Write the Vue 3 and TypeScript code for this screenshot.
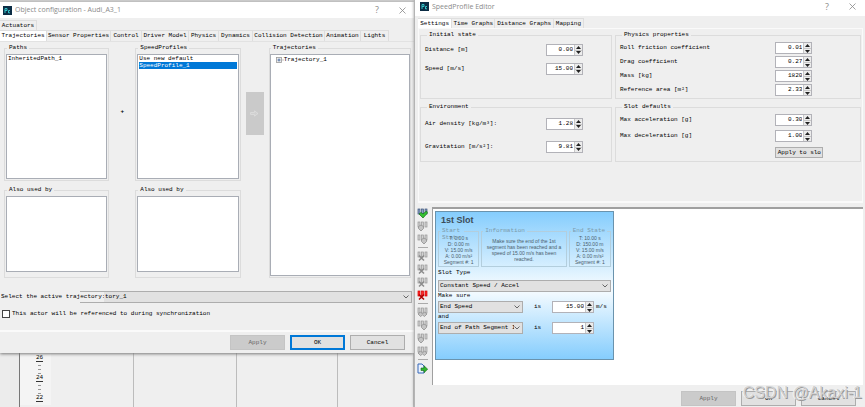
<script setup lang="ts">
import { ref } from 'vue'

interface Field {
  id: string
  label: string
  value: string
}

interface Tool {
  name: string
  kind: 'check' | 'arrow' | 'cross' | 'red' | 'plus' | 'export' | 'line'
  at?: number
}

const objectTabs = ['Trajectories', 'Sensor Properties', 'Control', 'Driver Model', 'Physics', 'Dynamics', 'Collision Detection', 'Animation', 'Lights']
const profileTabs = ['Settings', 'Time Graphs', 'Distance Graphs', 'Mapping']

const initial = ref<Field[]>([
  { id: 'distance', label: 'Distance [m]', value: '0.00' },
  { id: 'speed', label: 'Speed [m/s]', value: '15.00' },
])
const physics = ref<Field[]>([
  { id: 'roll', label: 'Roll friction coefficient', value: '0.01' },
  { id: 'drag', label: 'Drag coefficient', value: '0.27' },
  { id: 'mass', label: 'Mass [kg]', value: '1820' },
  { id: 'area', label: 'Reference area [m²]', value: '2.33' },
])
const environment = ref<Field[]>([
  { id: 'air', label: 'Air density [kg/m³]:', value: '1.28' },
  { id: 'gravity', label: 'Gravitation [m/s²]:', value: '9.81' },
])
const defaults = ref<Field[]>([
  { id: 'accel', label: 'Max acceleration [g]', value: '0.30' },
  { id: 'decel', label: 'Max deceleration [g]', value: '1.00' },
])
const endSpeed = ref('15.00')
const segment = ref('1')

const tools: Tool[] = [
  { name: 'Validate', kind: 'check' },
  { name: 'Insert before', kind: 'arrow', at: 4 },
  { name: 'Insert after', kind: 'arrow', at: 7 },
  { name: 's1', kind: 'line' },
  { name: 'Delete all', kind: 'cross', at: 4 },
  { name: 'Delete left', kind: 'cross', at: 4 },
  { name: 'Delete right', kind: 'cross', at: 4 },
  { name: 'Delete slot', kind: 'red', at: 4 },
  { name: 's2', kind: 'line' },
  { name: 'Copy', kind: 'plus', at: 5 },
  { name: 'Paste after', kind: 'arrow', at: 7 },
  { name: 'Paste before', kind: 'arrow', at: 4 },
  { name: 'Duplicate', kind: 'plus', at: 5 },
  { name: 's3', kind: 'line' },
  { name: 'Export', kind: 'export' },
]
</script>

<template>
  <div class="desktop">
    <div class="left">
      <section class="window">
        <header class="title">
          <svg class="logo" viewBox="0 0 9 9"><rect width="9" height="9" fill="#0b2c44" /><path d="M2 7V2.500H4V4.500H2M5.500 7V4.500H7M5.500 6.800H7" fill="none" stroke="#35c4c9" /></svg>
          <h1>Object configuration - Audi_A3_1</h1>
          <button class="sys" aria-label="Help">?</button>
          <button class="sys" aria-label="Close"><svg viewBox="0 0 7 7"><path d="M.5.5l6 6M6.500.5l-6 6" stroke="#888" stroke-width=".8" /></svg></button>
        </header>
        <div class="tabs first"><button class="tab">Actuators</button></div>
        <div class="tabs object">
          <button v-for="(t, i) in objectTabs" :key="t" class="tab" :class="{ active: i === 0 }">{{ t }}</button>
        </div>
        <div class="objpanel">
          <div class="lists">
            <div class="stack">
              <fieldset class="paths"><legend>Paths</legend><ul class="list"><li>InheritedPath_1</li></ul></fieldset>
              <fieldset class="used"><legend>Also used by</legend><ul class="list"></ul></fieldset>
            </div>
            <span class="plus">+</span>
            <div class="stack">
              <fieldset class="paths"><legend>SpeedProfiles</legend><ul class="list"><li>Use new default</li><li class="sel">SpeedProfile_1</li></ul></fieldset>
              <fieldset class="used"><legend>Also used by</legend><ul class="list"></ul></fieldset>
            </div>
            <button class="assign" aria-label="Assign"><svg viewBox="0 0 9 7"><path d="M.5 2.500h4V.8L8 3.500 4.500 6.200V4.500h-4z" fill="#d0d0d0" stroke="#e2e2e2" stroke-width=".6" /></svg></button>
            <fieldset class="tree">
              <legend>Trajectories</legend>
              <ul class="list">
                <li><svg class="node" viewBox="0 0 8 6"><rect x=".5" y=".5" width="5" height="5" fill="#eee" stroke="#999" stroke-width=".8" /><path d="M1.500 3h3M3 1.500v3" stroke="#345a9a" stroke-width=".8" /><path d="M6 3h2" stroke="#aaa" stroke-width=".7" /></svg>Trajectory_1</li>
              </ul>
            </fieldset>
          </div>
          <div class="active-row">
            <label for="trajectory">Select the active trajectory:</label>
            <div class="combo"><select id="trajectory"><option>tory_1</option></select><svg viewBox="0 0 6 4"><path d="M.5.5L3 3 5.500.5" fill="none" stroke="#666" /></svg></div>
          </div>
          <label class="check"><input type="checkbox" /><span>This actor will be referenced to during synchronization</span></label>
        </div>
        <footer class="foot">
          <button class="btn" disabled>Apply</button><button class="btn primary">OK</button><button class="btn">Cancel</button>
        </footer>
      </section>
      <div class="timeline">
        <div class="gutter"></div>
        <div class="scale">
          <template v-for="n in [26, 24, 22]" :key="n"><span class="num">{{ n }}</span><i></i><i></i><i></i></template>
        </div>
        <div class="lane"></div><div class="lane"></div><div class="lane"></div><div class="lane"></div>
      </div>
    </div>

    <section class="window right">
      <header class="title">
        <svg class="logo" viewBox="0 0 9 9"><rect width="9" height="9" fill="#0b2c44" /><path d="M2 7V2.500H4V4.500H2M5.500 7V4.500H7M5.500 6.800H7" fill="none" stroke="#35c4c9" /></svg>
        <h1>SpeedProfile Editor</h1>
        <button class="sys" aria-label="Help">?</button>
        <button class="sys" aria-label="Close"><svg viewBox="0 0 7 7"><path d="M.5.5l6 6M6.500.5l-6 6" stroke="#888" stroke-width=".8" /></svg></button>
      </header>
      <div class="tabs profile">
        <button v-for="(t, i) in profileTabs" :key="t" class="tab" :class="{ active: i === 0 }">{{ t }}</button>
      </div>
      <div class="settings">
        <fieldset v-for="g in [
          { name: 'Initial state', cls: 'g-initial', fields: initial },
          { name: 'Physics properties', cls: 'g-physics', fields: physics },
          { name: 'Environment', cls: 'g-env', fields: environment },
          { name: 'Slot defaults', cls: 'g-slot', fields: defaults },
        ]" :key="g.name" :class="g.cls">
          <legend>{{ g.name }}</legend>
          <div v-for="f in g.fields" :key="f.id" class="field">
            <label :for="f.id">{{ f.label }}</label>
            <div class="spin">
              <input :id="f.id" v-model="f.value" type="text" />
              <span class="steps"><button aria-label="Increase"><svg viewBox="0 0 5 3"><path d="M2.500 0L5 3H0z" /></svg></button><button aria-label="Decrease"><svg viewBox="0 0 5 3"><path d="M0 0h5L2.500 3z" /></svg></button></span>
            </div>
          </div>
          <div v-if="g.cls === 'g-slot'" class="field"><span></span><button class="btn small">Apply to slo</button></div>
        </fieldset>
      </div>
      <div class="work">
        <div class="toolbar">
          <template v-for="t in tools" :key="t.name">
            <hr v-if="t.kind === 'line'" />
            <button v-else :aria-label="t.name">
              <svg v-if="t.kind === 'export'" viewBox="0 0 11 11"><path d="M1 1h4l2 2v7H1z" fill="#eaf2ff" stroke="#3567b8" /><path d="M4 5h3V2.800L10.700 6.200 7 9.700V7.500H4z" fill="#2fb52f" stroke="#176817" stroke-width=".6" /></svg>
              <svg v-else viewBox="0 0 11 11">
                <g :class="t.kind">
                  <rect x="1" y="1" width="2" height="5" /><rect x="4.500" y="1" width="2" height="5" /><rect x="8" y="1" width="2" height="5" />
                </g>
                <path v-if="t.kind === 'check'" d="M2 6l2-1.500 2 1.500 3.500-3L10.500 5 6 10z" fill="#35c332" stroke="#146b16" stroke-width=".7" />
                <path v-if="t.kind === 'cross' || t.kind === 'red'" d="M2 4.500l5 5M7 4.500l-5 5" :stroke="t.kind === 'red' ? '#b00000' : '#8b8b8b'" stroke-width="1.500" />
                <path v-if="t.kind === 'arrow'" :d="`M${(t.at ?? 4) - 2.5} 5.500l2.500-1.500 2.500 1.500v2l-2.500 2.500-2.500-2.500z`" fill="#c4c4c4" stroke="#8f8f8f" stroke-width=".8" />
                <path v-if="t.kind === 'plus'" d="M1 7l2.500-2 2 2 2-2L10 7 7.500 9.500l-2-1.500-2 1.500z" fill="#c4c4c4" stroke="#8f8f8f" stroke-width=".8" />
              </svg>
            </button>
          </template>
        </div>
        <div class="canvas">
          <article class="slot">
            <h2>1st Slot</h2>
            <div class="states">
              <fieldset><legend class="wrap">Start State</legend><p>T: 0.00 s<br />D: 0.00 m<br />V: 15.00 m/s<br />A: 0.00 m/s²<br />Segment #: 1</p></fieldset>
              <fieldset class="info"><legend>Information</legend><p>Make sure the end of the 1st<br />segment has been reached and a<br />speed of 15.00 m/s has been<br />reached.</p></fieldset>
              <fieldset><legend>End State</legend><p>T: 10.00 s<br />D: 150.00 m<br />V: 15.00 m/s<br />A: 0.00 m/s²<br />Segment #: 1</p></fieldset>
            </div>
            <label for="slot-type" class="type">Slot Type</label>
            <div class="combo"><select id="slot-type"><option>Constant Speed / Accel</option></select><svg viewBox="0 0 6 4"><path d="M.5.5L3 3 5.500.5" fill="none" stroke="#666" /></svg></div>
            <label for="cond1" class="cond">Make sure</label>
            <div class="condrow">
              <div class="combo"><select id="cond1"><option>End Speed</option></select><svg viewBox="0 0 6 4"><path d="M.5.5L3 3 5.500.5" fill="none" stroke="#666" /></svg></div>
              <label for="end-speed">is</label>
              <div class="spin"><input id="end-speed" v-model="endSpeed" type="text" /><span class="steps"><button aria-label="Increase"><svg viewBox="0 0 5 3"><path d="M2.500 0L5 3H0z" /></svg></button><button aria-label="Decrease"><svg viewBox="0 0 5 3"><path d="M0 0h5L2.500 3z" /></svg></button></span></div>
              <span>m/s</span>
            </div>
            <label for="cond2" class="cond">and</label>
            <div class="condrow">
              <div class="combo"><select id="cond2"><option>End of Path Segment I</option></select><svg viewBox="0 0 6 4"><path d="M.5.5L3 3 5.500.5" fill="none" stroke="#666" /></svg></div>
              <label for="segment">is</label>
              <div class="spin"><input id="segment" v-model="segment" type="text" /><span class="steps"><button aria-label="Increase"><svg viewBox="0 0 5 3"><path d="M2.500 0L5 3H0z" /></svg></button><button aria-label="Decrease"><svg viewBox="0 0 5 3"><path d="M0 0h5L2.500 3z" /></svg></button></span></div>
            </div>
          </article>
        </div>
      </div>
      <footer class="foot">
        <button class="btn" disabled>Apply</button><button class="btn">OK</button><button class="btn">Cancel</button>
      </footer>
      <div class="watermark">CSDN @Akaxi-1</div>
    </section>
  </div>
</template>

<style>
body { background: #efefef; }
</style>

<style scoped>
.desktop, .desktop * { box-sizing: border-box; }
.desktop {
  display: grid;
  grid-template-columns: 414fr 451fr;
  min-height: 100vh;
  overflow: hidden;
  font: 6px/8px "Liberation Mono", monospace;
  color: #000;
  background: #efefef;
  white-space: nowrap;
}
button, input, select { font: inherit; color: inherit; margin: 0; padding: 0; border: 0; background: none; border-radius: 0; appearance: none; outline: 0; line-height: 10px; }
ul, p, h1, h2 { margin: 0; padding: 0; list-style: none; font-weight: normal; }
svg { display: block; }
.left { display: flex; flex-direction: column; border-top: 2px solid #cfcfcf; min-width: 0; }
.window { display: flex; flex-direction: column; background: #efefef; min-width: 0; }
.left .window { box-shadow: 0 1px 3px #777; z-index: 1; }
.right { position: relative; border-left: 1px solid #b4b4b4; box-shadow: 0 0 3px #999; z-index: 2; }
.title { display: flex; align-items: center; height: 16px; padding: 0 7px 0 3px; background: #fff; color: #8a8a8a; }
.right .title { padding: 0 8px 3px 5px; }
.logo { width: 9px; height: 9px; }
.title h1 { flex: 1; margin-left: 3px; font: 7px/10px "Open Sans", sans-serif; }
.sys { width: 8px; margin-left: 18px; font: 9px/10px "Open Sans", sans-serif; text-align: center; }
.sys svg { width: 7px; height: 7px; }

.tabs { display: grid; }
.tab { height: 11px; border: 1px solid #dedede; border-width: 1px 1px 0 0; text-align: center; }
.tab.active { background: #fff; }
.first { margin-top: 2px; grid-template-columns: 37px 1fr; }
.first .tab { height: 10px; }
.object { grid-template-columns: 47fr 64fr 31fr 47fr 30fr 34fr 72fr 36fr 28fr; margin-right: 25px; }
.profile { grid-template-columns: 34fr 43fr 58fr 30fr; margin: 2px 281px 0 3px; }
.profile .tab { height: 10px; line-height: 9px; }

fieldset { min-width: 0; margin: 0; padding: 2px 1px 1px; border: 1px solid #dcdcdc; }
legend { height: 8px; margin-left: 1px; padding: 0 2px; }
.objpanel { padding: 2px 3px 12px 4px; border-bottom: 2px solid #fafafa; border-top: 1px solid #e2e2e2; }
.lists { display: grid; grid-template-columns: 105fr 26fr 105fr 28fr 142fr; }
.stack { display: flex; flex-direction: column; gap: 5px; }
.list { border: 1px solid #a9adb5; background: #fff; padding: 0 1px; }
.paths .list { height: 125px; }
.used .list { height: 76px; margin-bottom: 4px; }
.list li { height: 7px; line-height: 8px; }
.list .sel { background: #0078d7; color: #fff; }
.tree { padding: 2px 0 0; }
.tree .list { height: 222px; }
.tree .list li { display: flex; align-items: center; height: 9px; padding-left: 4px; }
.node { width: 8px; height: 6px; }
.plus { place-self: start center; margin-top: 64px; font-weight: bold; }
.assign { align-self: start; display: grid; place-items: center; height: 43px; margin: 48px 5px 0; background: #cacaca; }
.assign svg { width: 9px; height: 7px; }
.active-row { display: grid; align-items: center; margin: 13px -1px 0 -3px; }
.active-row label, .active-row .combo { grid-area: 1 / 1; }
.active-row label { position: relative; z-index: 1; justify-self: start; width: 103px; height: 10px; line-height: 10px; background: #efefef; overflow: hidden; }
.active-row .combo { margin-left: 79px; }
.active-row .combo select { padding-left: 24px; }
.combo { position: relative; display: grid; min-width: 0; }
.combo select { width: 100%; height: 12px; padding: 0 8px 0 1px; border: 1px solid #adadad; background: #e1e1e1; }
.combo svg { position: absolute; right: 3px; top: 4px; width: 6px; height: 4px; pointer-events: none; }
.check { display: flex; align-items: center; gap: 2px; margin: 6px 0 0 -2px; height: 9px; }
.check input { width: 8px; height: 8px; border: 1px solid #444; background: #fff; }

.foot { display: flex; justify-content: flex-end; gap: 5px; padding: 3px 9px; }
.btn { width: 55px; height: 15px; border: 1px solid #adadad; background: #e1e1e1; text-align: center; }
.btn:disabled { border-color: #c4c4c4; background: #cbcbcb; color: #666; }
.btn.primary { border: 2px solid #0078d7; }
.btn.small { width: 48px; height: 11px; line-height: 9px; }

.timeline { flex: 1; display: grid; grid-template-columns: 20fr 31fr 83fr 103fr 101fr 76fr; }
.gutter { border-right: 1px solid #777; background: #ececec; }
.scale { display: flex; flex-direction: column; align-items: center; height: 52px; overflow: hidden; background: #f4f4f4; padding: 1px 0 0 8px; }
.num { flex: none; height: 8px; border-bottom: 1px solid #333; }
.scale i { width: 3px; height: 1px; margin-top: 3px; flex: none; background: #999; }
.lane { border-right: 1px solid #bcbcbc; }

.settings { display: grid; grid-template-columns: 192fr 246fr; grid-template-rows: 68px 59px; gap: 4px 3px; margin: 0 2px 4px 3px; padding: 2px 1px 39px; border: 1px solid #fafafa; border-bottom-width: 2px; }
.settings legend { margin-left: 2px; }
.settings fieldset { padding: 1px 0 0 4px; }
.settings .g-physics { padding-top: 2px; }
.field { display: grid; grid-template-columns: 121fr 65fr; align-items: center; height: 19px; }
.g-env .field { height: 23px; }
.g-physics .field { height: 14px; }
.g-slot .field { height: 16px; }
.g-physics .field, .g-slot .field { grid-template-columns: 156fr 85fr; }
.spin { display: flex; width: 37px; height: 12px; border: 1px solid #b2b2b8; background: #fff; }
.spin input { flex: 1; min-width: 0; width: 0; text-align: right; padding-right: 1px; }
.steps { display: grid; grid-template-rows: 1fr 1fr; width: 8px; border-left: 1px solid #c8c8c8; background: #ececec; }
.steps button { display: grid; place-items: center; min-height: 0; line-height: 0; }
.steps button + button { border-top: 1px solid #c8c8c8; }
.steps svg { width: 5px; height: 3px; fill: #222; }

.work { flex: 1; display: grid; grid-template-columns: 13px 1fr; gap: 3px; padding: 0 2px 0 1px; }
.toolbar { display: flex; flex-direction: column; align-items: center; }
.toolbar button { width: 11px; height: 13px; flex: none; }
.toolbar svg { width: 11px; height: 11px; }
.toolbar hr { width: 10px; height: 1px; flex: none; margin: 1px 0 2px; border: 0; background: #aaa; }
.toolbar g rect { fill: #d2d2d2; stroke: #979797; stroke-width: .7; }
.toolbar g.check rect { fill: #8ba3c4; stroke: #3b5279; }
.toolbar g.red rect { fill: #ff2a2a; stroke: #d80000; }
.canvas { border: 2px solid #a0a0a0; border-width: 2px 0 0 1px; background: #fff; padding: 2px; }
.slot { width: 179px; min-height: 149px; padding: 3px 2px; border: 1px solid #6a93ad; background: linear-gradient(#85cdfd, #f2faff 50%, #f2faff 55%, #85cdfd); }
.slot h2 { margin-left: 3px; font: bold 9px/11px "Liberation Sans", sans-serif; color: #3c4c58; }
.states { display: grid; grid-template-columns: 41fr 85fr 42fr; gap: 2px; margin-top: 1px; }
.states fieldset { position: relative; height: 40px; padding: 0; border-color: #b3cedd; color: #7d9aab; }
.states p { font: 5px/6px "Liberation Sans", sans-serif; text-align: center; color: #4a606d; }
.states .info p { padding-top: 3px; }
.states .wrap { height: 8px; width: 24px; white-space: normal; line-height: 7px; }
.type { display: block; margin: 2px 0 3px; }
.cond { display: block; margin-top: 0; }
.condrow { display: grid; grid-template-columns: 85px 29px 42px 1fr; align-items: center; margin-top: 1px; }
.condrow > label { text-align: center; }
.condrow .spin { width: 42px; }
.condrow > span { padding-left: 2px; }
.right .foot { padding: 6px 9px 1px; }
.watermark { position: absolute; right: 3px; bottom: 5px; font: 16px/18px "Liberation Sans", sans-serif; color: #d2d2d2; text-shadow: 1px 1px 0 #999, -1px 0 0 #f7f7f7; pointer-events: none; }
</style>
